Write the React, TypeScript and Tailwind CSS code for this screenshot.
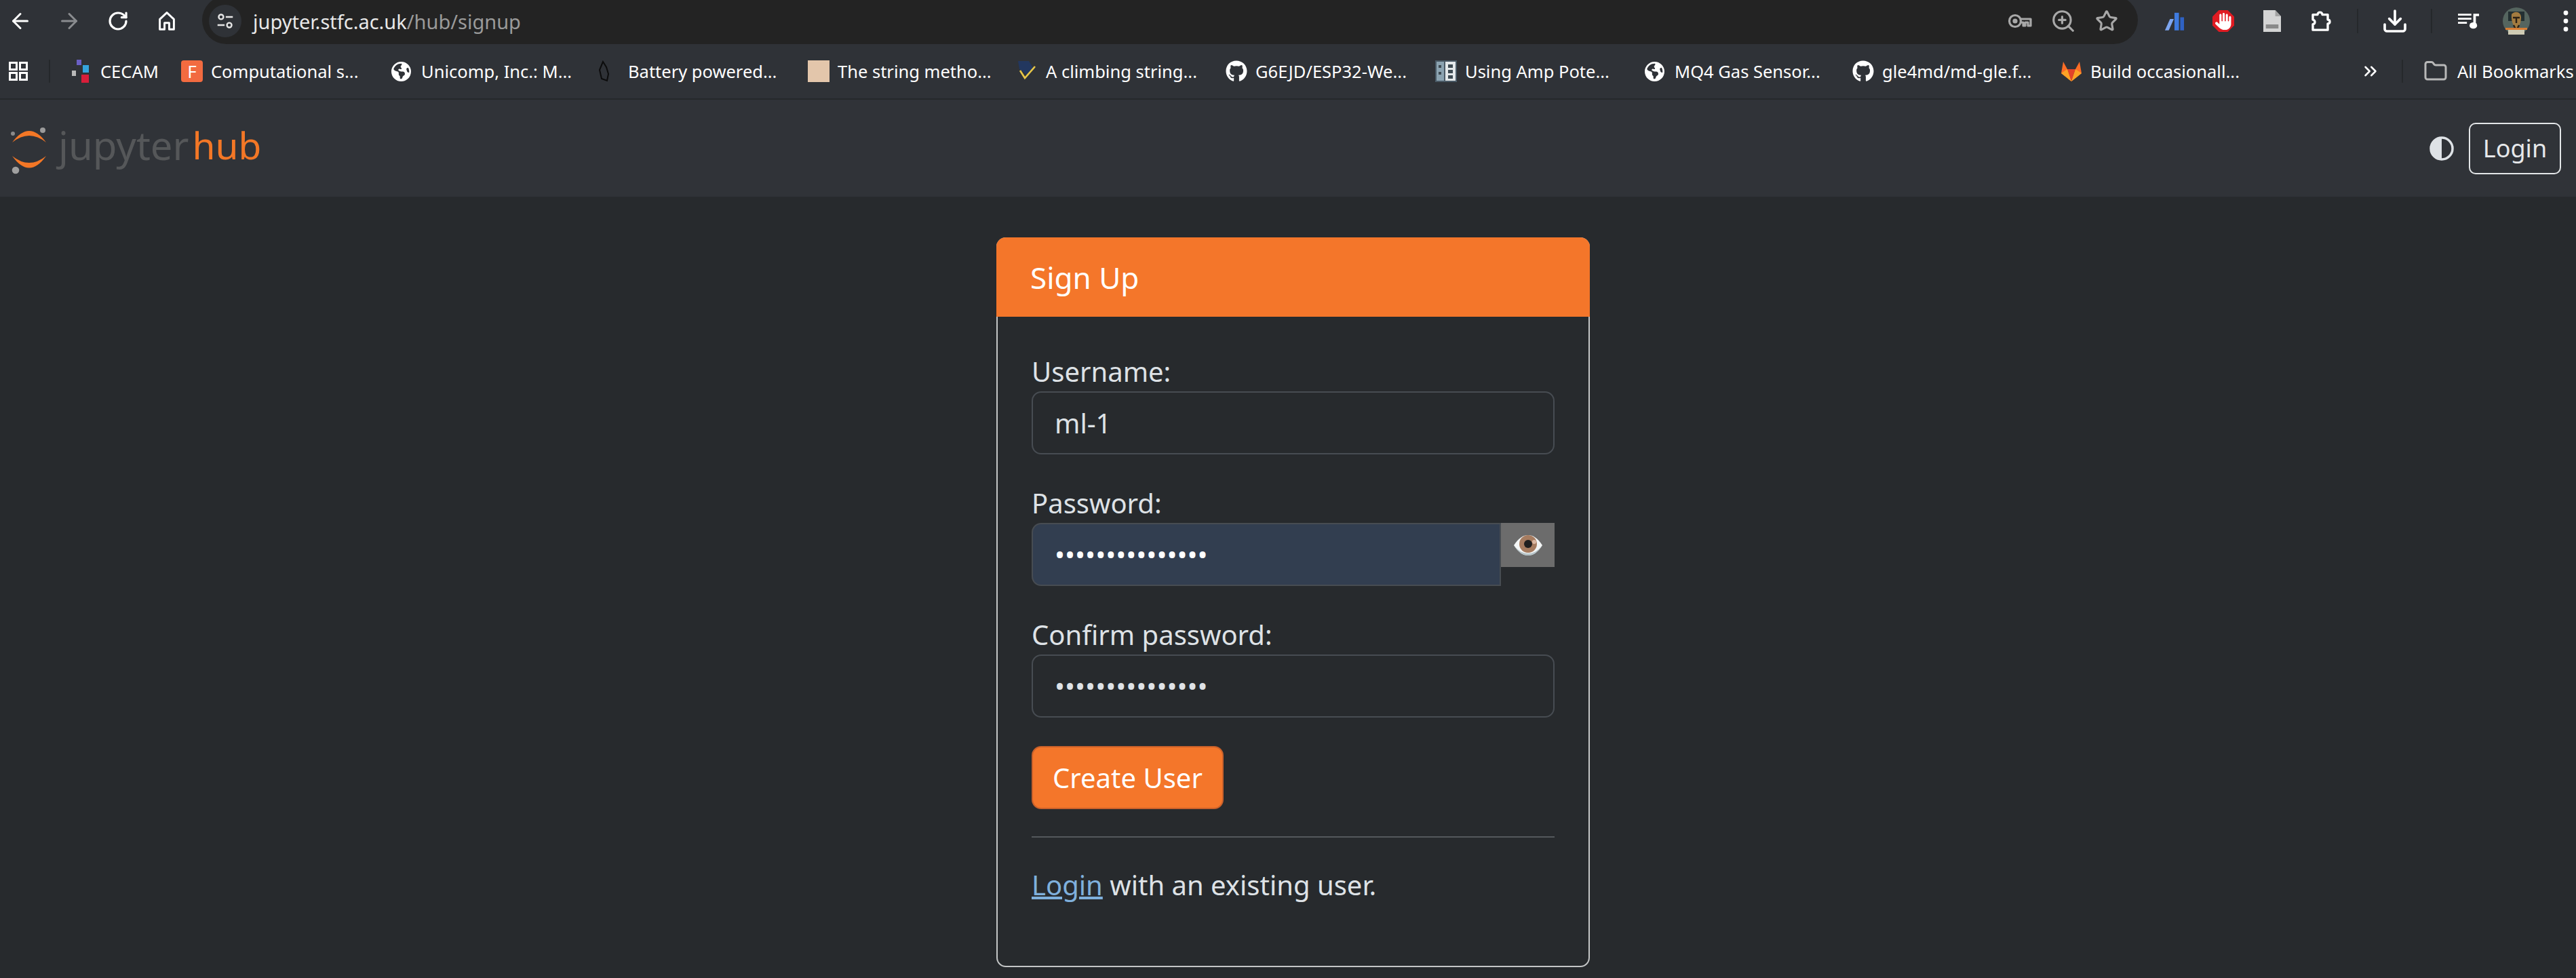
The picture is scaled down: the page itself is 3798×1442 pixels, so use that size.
import { ArrowLeft, ArrowRight, RotateCw, ZoomIn, Star, Download, ChevronsRight, Folder } from "lucide-react";
import { FaGithub } from "react-icons/fa";
import { FaEarthAmericas, FaHand } from "react-icons/fa6";
import type { ReactNode } from "react";

function Home() {
  return (
    <svg viewBox="0 0 30 34" className="h-[30px] w-[26px]" fill="none" stroke="#fff" strokeWidth="3.4" preserveAspectRatio="none">
      <path d="M3 14 15 3l12 11v17h-8V20h-8v11H3z" strokeLinejoin="round" />
    </svg>
  );
}

function Tune() {
  return (
    <svg viewBox="0 0 30 30" className="h-[26px] w-[26px]" fill="none" stroke="#e5e5e5" strokeWidth="2.8">
      <circle cx="8" cy="8" r="4" />
      <path d="M16 8h12M2 22h12" />
      <circle cx="22" cy="22" r="4" />
    </svg>
  );
}

function Key() {
  return (
    <svg viewBox="0 0 36 22" className="h-[22px] w-[36px]" fill="none" stroke="#a8a8a8" strokeWidth="3.2">
      <circle cx="11" cy="11" r="8.500" />
      <circle cx="11" cy="11" r="2" fill="#a8a8a8" />
      <path d="M19 8h15v10h-4v-5h-4v5h-3v-5h-4" strokeLinejoin="round" />
    </svg>
  );
}

function Books() {
  return (
    <svg viewBox="0 0 32 48" className="h-[29px] w-[30px]" preserveAspectRatio="none">
      <path d="M9 18h6L7 46H1z" fill="#7ea6f0" />
      <path d="M16 3h7v43h-7z" fill="#3f7be0" />
      <path d="M25 14h6v32h-6z" fill="#2f62c4" />
    </svg>
  );
}

function AdBlock() {
  return (
    <div className="relative flex h-[32px] w-[32px] items-center justify-center">
      <svg viewBox="0 0 34 34" className="h-[32px] w-[32px]">
        <path d="M10 0h14l10 10v14L24 34H10L0 24V10z" fill="#e01b22" />
      </svg>
      <FaHand className="absolute text-[25px] text-white" />
    </div>
  );
}

function Doc() {
  return (
    <svg viewBox="0 0 28 32" className="h-[32px] w-[26px]" preserveAspectRatio="none">
      <path d="M0 0h19l9 9v23H0z" fill="#d4d4d4" />
      <path d="M19 0l9 9h-9z" fill="#a2a2a2" />
      <path d="M4 21h20v6H4z" fill="#8a8a8a" />
    </svg>
  );
}

function Puzzle() {
  return (
    <svg viewBox="0 0 30 34" className="h-[32px] w-[30px]" fill="none" stroke="#fff" strokeWidth="3.4" preserveAspectRatio="none">
      <path d="M3 7h7c0-5 7-5 7 0h8v8c4 0 4 6 0 6v10H3v-9c4 0 4-7 0-7z" strokeLinejoin="round" />
    </svg>
  );
}

function Music() {
  return (
    <svg viewBox="0 0 34 36" className="h-[24px] w-[32px]" fill="#fff" preserveAspectRatio="none">
      <path d="M0 2h21v4H0zM0 11h21v4H0zM0 20h14v4H0z" />
      <path d="M24 2h9v5h-5v21h-4z" />
      <ellipse cx="24" cy="28" rx="6" ry="7" />
    </svg>
  );
}

function Avatar() {
  return (
    <svg viewBox="0 0 40 40" className="h-[40px] w-[40px]">
      <circle cx="20" cy="20" r="20" fill="#55655f" />
      <path d="M8 6h24v14H8z" fill="#233032" />
      <path d="M13 10c6-6 14-3 14 5 0 9-4 15-7 15s-8-8-7-20" fill="#a37c40" />
      <path d="M15 15h10M20 15v8M16 26l4 8 4-8" stroke="#2b2115" strokeWidth="2.400" fill="none" />
      <path d="M4 30h32v3H4z" fill="#d77d33" />
      <path d="M8 33h24v7H8z" fill="#cfcbb4" />
    </svg>
  );
}

function Dots() {
  return (
    <svg viewBox="0 0 8 32" className="h-[32px] w-[8px]" fill="#fff">
      <circle cx="4" cy="4" r="3.400" />
      <circle cx="4" cy="16" r="3.400" />
      <circle cx="4" cy="28" r="3.400" />
    </svg>
  );
}

function Apps() {
  return (
    <svg viewBox="0 0 28 28" className="h-[28px] w-[28px]" fill="none" stroke="#fff" strokeWidth="3">
      <path d="M1.500 1.500h10v10h-10zM16.500 1.500h10v10h-10zM1.500 16.500h10v10h-10zM16.500 16.500h10v10h-10z" />
    </svg>
  );
}

function Cecam() {
  return (
    <svg viewBox="0 0 28 34" className="h-[34px] w-[28px]">
      <path d="M9 0h7v8H9z" fill="#6a5fc4" />
      <path d="M18 8h9v11h-9z" fill="#35a4dd" />
      <path d="M2 16h6v8H2z" fill="#b9b9b9" />
      <path d="M16 22h11v12H16z" fill="#d81e3a" />
    </svg>
  );
}

function FIcon() {
  return (
    <div className="flex h-[32px] w-[32px] items-center justify-center rounded-[4px] bg-[#f26b40] text-[26px] leading-none text-white">
      F
    </div>
  );
}

function Battery() {
  return (
    <svg viewBox="0 0 18 32" className="h-[32px] w-[18px]" fill="none" stroke="#0c0c0c" strokeWidth="2">
      <path d="M7 2 2 14l3 13 8 3 2-10-3-10z" />
    </svg>
  );
}

function Climbing() {
  return (
    <svg viewBox="0 0 30 30" className="h-[30px] w-[30px]">
      <path d="M3 0h16l6 10-9 10L5 12z" fill="#22375f" />
      <path d="M6 14l7 11L28 8" fill="none" stroke="#e8c748" strokeWidth="2.600" />
    </svg>
  );
}

function Amp() {
  return (
    <svg viewBox="0 0 32 32" className="h-[32px] w-[32px]">
      <path d="M0 0h32v32H0z" fill="#4a5a66" />
      <path d="M2 2h11v28H2z" fill="#8ba3b1" />
      <path d="M15 2h15v28H15z" fill="#e3e8ea" />
      <path d="M19 6h7v5h-7zM19 14h7v5h-7zM19 22h7v5h-7zM5 7h4v4H5zM5 17h4v4H5z" fill="#3d4a52" />
    </svg>
  );
}

function Gitlab() {
  return (
    <svg viewBox="0 0 32 32" className="h-[32px] w-[32px]">
      <path d="M16 31 1 19 4 2l6 11z" fill="#fc6d26" />
      <path d="M16 31l15-12L28 2l-6 11z" fill="#fc6d26" />
      <path d="M10 13h12l-6 18z" fill="#e24329" />
      <path d="M1 19l9-6 6 18zM31 19l-9-6-6 18z" fill="#fca326" />
    </svg>
  );
}

const bookmarks: { label: string; icon: ReactNode; box: string }[] = [
  { label: "CECAM", icon: <Cecam />, box: "w-[163px]" },
  { label: "Computational s...", icon: <FIcon />, box: "w-[310px]" },
  { label: "Unicomp, Inc.: M...", icon: <FaEarthAmericas className="text-[29px] text-white" />, box: "w-[305px]" },
  { label: "Battery powered...", icon: <Battery />, box: "w-[309px]" },
  { label: "The string metho...", icon: <div className="h-[32px] w-[32px] bg-[#e3c6ab]" />, box: "w-[307px]" },
  { label: "A climbing string...", icon: <Climbing />, box: "w-[309px]" },
  { label: "G6EJD/ESP32-We...", icon: <FaGithub className="text-[32px] text-white" />, box: "w-[309px]" },
  { label: "Using Amp Pote...", icon: <Amp />, box: "w-[309px]" },
  { label: "MQ4 Gas Sensor...", icon: <FaEarthAmericas className="text-[29px] text-white" />, box: "w-[306px]" },
  { label: "gle4md/md-gle.f...", icon: <FaGithub className="text-[32px] text-white" />, box: "w-[307px]" },
  { label: "Build occasionall...", icon: <Gitlab />, box: "w-[442px]" },
];

function Eye() {
  return (
    <svg viewBox="0 0 44 32" className="h-[32px] w-[44px]">
      <path d="M1 16C8 5 15 1 22 1s14 4 21 15c-7 11-14 15-21 15S8 27 1 16z" fill="#f4f6f6" />
      <path d="M1 16c7 11 14 15 21 15s14-4 21-15c-7 9-14 12-21 12S8 25 1 16z" fill="#b6c4c8" />
      <circle cx="22" cy="14" r="13" fill="#a67c60" />
      <circle cx="22" cy="14" r="6" fill="#1f1f1f" />
      <circle cx="31" cy="11" r="3" fill="#dcb8a2" />
    </svg>
  );
}

function Field({ label, children }: { label: string; children: ReactNode }) {
  return (
    <div className="mb-[42px]">
      <label className="block text-[40px] leading-[59px] text-[#dee2e6]">{label}</label>
      {children}
    </div>
  );
}

export default function App() {
  return (
    <div className="h-[1442px] w-[3798px] overflow-hidden bg-[#272a2d] font-['Noto_Sans',sans-serif]">
      {/* Browser toolbar */}
      <div className="flex h-[65px] items-center bg-[#2f3237] pb-[3px]">
        <div className="flex items-center gap-[12px]">
          <div className="flex w-[60px] justify-center"><ArrowLeft size={36} color="#fff" strokeWidth={2} /></div>
          <div className="flex w-[60px] justify-center"><ArrowRight size={36} color="#8a8c8f" strokeWidth={2} /></div>
          <div className="flex w-[60px] justify-center"><RotateCw size={32} color="#fff" strokeWidth={2.4} /></div>
          <div className="flex w-[60px] justify-center"><Home /></div>
        </div>
        <div className="ml-[22px] mb-[-3px] flex h-[71px] w-[2854px] shrink-0 items-center self-end rounded-full bg-[#232323] pl-[10px] pr-[14px] pt-[3px]">
          <div className="flex h-[48px] w-[48px] items-center justify-center rounded-full bg-[#2f3237]"><Tune /></div>
          <div className="ml-[17px] flex-1 text-[29px] leading-none text-[#e8e8e8]">
            jupyter.stfc.ac.uk<span className="text-[#9a9a9a]">/hub/signup</span>
          </div>
          <div className="flex w-[64px] justify-center"><Key /></div>
          <div className="flex w-[64px] justify-center"><ZoomIn size={38} color="#a8a8a8" strokeWidth={2} /></div>
          <div className="flex w-[64px] justify-center"><Star size={34} color="#a8a8a8" strokeWidth={2.2} /></div>
        </div>
        <div className="ml-[18px] flex items-center">
          <div className="flex w-[72px] justify-center"><Books /></div>
          <div className="flex w-[72px] justify-center"><AdBlock /></div>
          <div className="flex w-[72px] justify-center"><Doc /></div>
          <div className="flex w-[72px] justify-center"><Puzzle /></div>
        </div>
        <div className="ml-[17px] h-[36px] w-[2px] bg-[#25282b]" />
        <div className="ml-[18px] flex w-[72px] justify-center"><Download size={40} color="#fff" strokeWidth={2.2} /></div>
        <div className="ml-[17px] h-[36px] w-[2px] bg-[#25282b]" />
        <div className="ml-[18px] flex w-[72px] justify-center"><Music /></div>
        <div className="flex w-[68px] justify-center"><Avatar /></div>
        <div className="ml-[35px] flex"><Dots /></div>
      </div>

      {/* Bookmarks bar */}
      <div className="flex h-[82px] items-center border-b-2 border-[#25282b] bg-[#2f3237] text-[25.5px] text-white">
        <div className="ml-[13px] flex"><Apps /></div>
        <div className="ml-[31px] h-[34px] w-[2px] bg-[#25282b]" />
        <div className="ml-[30px] flex items-center">
          {bookmarks.map((b) => (
            <div key={b.label} className={`flex items-center ${b.box}`}>
              <div className="flex w-[44px] shrink-0 items-center">{b.icon}</div>
              <span className="whitespace-nowrap">{b.label}</span>
            </div>
          ))}
        </div>
        <ChevronsRight size={30} color="#fff" strokeWidth={2} />
        <div className="ml-[31px] h-[34px] w-[2px] bg-[#25282b]" />
        <div className="ml-[30px] flex"><Folder size={36} color="#b8b8b8" strokeWidth={2} /></div>
        <span className="ml-[14px] whitespace-nowrap">All Bookmarks</span>
      </div>

      {/* Hub navbar */}
      <nav className="flex h-[143px] items-center justify-between bg-[#303338] pr-[22px]">
        <div className="flex items-center pl-[12px]">
          <svg viewBox="12 186 60 72" className="mt-[7px] h-[72px] w-[60px]">
            <path d="M18 210Q43 176 68 210Q43 190 18 210z" fill="#f37726" />
            <path d="M18 230Q43 265 68 230Q43 250 18 230z" fill="#f37726" />
            <circle cx="63" cy="192" r="4" fill="#9b9b9b" />
            <circle cx="19" cy="197" r="3" fill="#8a8a8a" />
            <circle cx="23" cy="251" r="5.300" fill="#a0a0a0" />
          </svg>
          <span className="mb-[10px] ml-[14px] text-[58px] leading-none text-[#555759]">jupyter</span>
          <span className="mb-[10px] ml-[5px] text-[55px] leading-none text-[#f37726]">hub</span>
        </div>
        <div className="flex items-center">
          <svg viewBox="0 0 36 36" className="h-[36px] w-[36px]">
            <circle cx="18" cy="18" r="16" fill="none" stroke="#dee2e6" strokeWidth="3.500" />
            <path d="M18 2a16 16 0 0 0 0 32z" fill="#dee2e6" />
          </svg>
          <button className="ml-[22px] flex h-[76px] w-[136px] items-center justify-center rounded-[10px] border-2 border-[#e3e6e8] text-[36px] text-[#e6e8ea]">
            Login
          </button>
        </div>
      </nav>

      {/* Sign up card */}
      <main className="flex justify-center pt-[60px]">
        <div className="ml-[15px] w-[875px] rounded-[14px] border-2 border-[#c4c6c7] bg-[#272a2d]">
          <div className="m-[-2px] flex h-[117px] items-center rounded-t-[14px] bg-[#f4762a] pl-[50px] text-[44px] text-white">
            Sign Up
          </div>
          <div className="h-[959px] px-[50px] pt-[53px]">
            <Field label="Username:">
              <input readOnly defaultValue="ml-1" className="block h-[93px] w-full rounded-[14px] border-2 border-[#474c52] bg-transparent px-[32px] text-[40px] text-[#dee2e6] outline-none" />
            </Field>
            <Field label="Password:">
              <div className="flex items-start">
                <input readOnly type="password" defaultValue="passwordpasswor" className="block h-[93px] w-[692px] rounded-l-[14px] border-2 border-[#474c52] bg-[#323e50] px-[32px] text-[40px] text-white outline-none" />
                <button className="flex h-[65px] w-[79px] items-center justify-center bg-[#6c6c6c]"><Eye /></button>
              </div>
            </Field>
            <Field label="Confirm password:">
              <input readOnly type="password" defaultValue="passwordpasswor" className="block h-[93px] w-full rounded-[14px] border-2 border-[#474c52] bg-transparent px-[32px] text-[40px] text-[#dee2e6] outline-none" />
            </Field>
            <button className="h-[93px] w-[283px] rounded-[14px] border-2 border-[#c9602a] bg-[#f4762a] text-[40px] text-white">
              Create User
            </button>
            <hr className="mt-[40px] border-t-2 border-[#54585c]" />
            <p className="mt-[41px] text-[40px] leading-[58px] text-[#dee2e6]">
              <a href="#" className="text-[#7fb0dc] underline">Login</a> with an existing user.
            </p>
          </div>
        </div>
      </main>
    </div>
  );
}
